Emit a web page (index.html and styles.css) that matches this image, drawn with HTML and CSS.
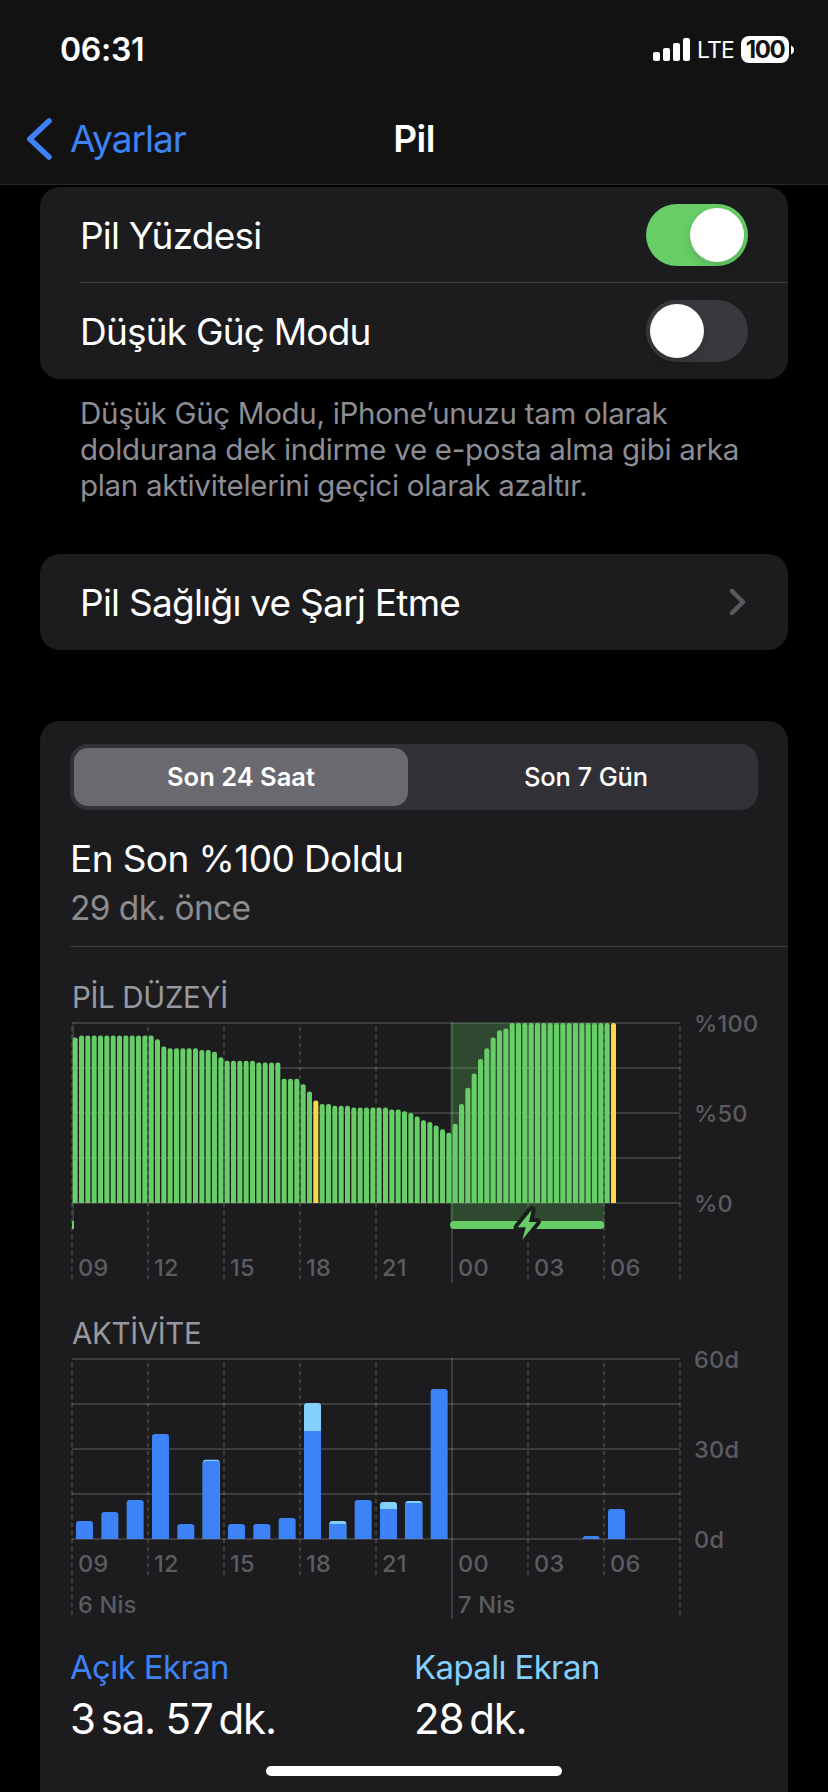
FILE: index.html
```
<!DOCTYPE html>
<html lang="tr">
<head>
    <meta charset="UTF-8">
    <meta name="viewport" content="width=device-width, initial-scale=1.0">
    <title>Pil</title>
    <link rel="stylesheet" href="styles.css">
</head>
<body>

    <div class="phone">
        <header class="header">
            <div class="status-bar">
                <span class="time">06:31</span>
                <div class="status-icons">
                    <svg class="signal" width="37" height="23" viewBox="0 0 37 23">
                        <rect x="0" y="14" width="7" height="9" rx="2"/>
                        <rect x="10" y="10" width="7" height="13" rx="2"/>
                        <rect x="20" y="5" width="7" height="18" rx="2"/>
                        <rect x="30" y="0" width="7" height="23" rx="2"/>
                    </svg>
                    <span class="network">LTE</span>
                    <span class="battery">100</span>
                    <svg class="battery-tip" width="3" height="10" viewBox="0 0 3 10">
                        <path d="M0 0.5C2 1 3 3 3 5S2 9 0 9.5Z"/>
                    </svg>
                </div>
            </div>
            <nav class="nav-bar">
                <a class="back">
                    <svg width="26" height="42" viewBox="0 0 26 42">
                        <path d="M22 3L2.800 21L22 39"/>
                    </svg>
                    <span>Ayarlar</span>
                </a>
                <h1 class="nav-title">Pil</h1>
            </nav>
        </header>

        <main class="content">
            <section class="group">
                <div class="row">
                    <span class="row-label">Pil Yüzdesi</span>
                    <div class="toggle on"><div class="knob"></div></div>
                </div>
                <div class="row">
                    <span class="row-label">Düşük Güç Modu</span>
                    <div class="toggle"><div class="knob"></div></div>
                </div>
            </section>
            <p class="footnote">Düşük Güç Modu, iPhone’unuzu tam olarak<br>doldurana dek indirme ve e-posta alma gibi arka<br>plan aktivitelerini geçici olarak azaltır.</p>

            <section class="group health">
                <div class="row">
                    <span class="row-label">Pil Sağlığı ve Şarj Etme</span>
                    <svg class="chevron" width="18" height="30" viewBox="0 0 18 30">
                        <path d="M3 4L14 15L3 26"/>
                    </svg>
                </div>
            </section>

            <section class="group usage">
                <div class="segmented">
                    <button class="segment selected">Son 24 Saat</button>
                    <button class="segment">Son 7 Gün</button>
                </div>
                <div class="last-charge">
                    <h2>En Son %100 Doldu</h2>
                    <p>29 dk. önce</p>
                </div>

                <h3 class="chart-title">PİL DÜZEYİ</h3>
                <svg class="chart" id="level-chart" width="718" height="270"></svg>

                <h3 class="chart-title activity-title">AKTİVİTE</h3>
                <svg class="chart" id="activity-chart" width="718" height="274"></svg>

                <div class="totals">
                    <div class="total screen-on">
                        <span class="total-label">Açık Ekran</span>
                        <span class="total-value">3<i></i>sa. 57<i></i>dk.</span>
                    </div>
                    <div class="total screen-off">
                        <span class="total-label">Kapalı Ekran</span>
                        <span class="total-value">28<i></i>dk.</span>
                    </div>
                </div>
            </section>
        </main>
        <div class="home-indicator"></div>
    </div>

    <script>
        const hours = ['09', '12', '15', '18', '21', '00', '03', '06'];

        // one value per 15 minutes
        const levels = [
            92, 93, 93, 93, 93, 93, 93, 93, 93, 93, 93, 93,
            93, 91, 87, 86, 86, 86, 86, 86, 85, 85, 84, 81,
            79, 79, 79, 79, 79, 78, 78, 78, 78, 69, 69, 69,
            66, 62, 57, 55, 55, 54, 54, 54, 53, 53, 53, 53,
            53, 53, 52, 52, 51, 50, 48, 46, 45, 43, 41, 39,
            44, 55, 64, 72, 80, 86, 92, 96, 97, 100, 100, 100,
            100, 100, 100, 100, 100, 100, 100, 100, 100, 100, 100, 100,
            100, 100
        ];
        const lowPower = [38, 85];

        // minutes per hour: [screen on, screen off]
        const activity = [
            [6, 0], [9, 0], [13, 0], [35, 0], [5, 0], [26, 0.4], [5, 0], [5, 0],
            [7, 0], [36, 9.3], [5, 1], [13, 0], [10, 2.3], [12, 0.7], [50, 0],
            [0, 0], [0, 0], [0, 0], [0, 0], [0, 0], [1, 0], [10, 0]
        ];

        function line(x1, y1, x2, y2, cls) {
            return `<line x1="${x1}" y1="${y1}" x2="${x2}" y2="${y2}" class="${cls}"/>`;
        }

        function text(x, y, value, cls) {
            return `<text x="${x}" y="${y}" class="${cls}">${value}</text>`;
        }

        // bar standing on the zero line with rounded top corners
        function bar(x, w, h, r, cls) {
            r = Math.min(r, h);
            return `<path class="${cls}" d="M${x} 180V${180 - h + r}q0 ${-r} ${r} ${-r}h${w - 2 * r}q${r} 0 ${r} ${r}V180Z"/>`;
        }

        function grid(tickEnd, edgeEnd, midnightEnd) {
            let out = '';
            for (let i = 0; i < 5; i++) {
                out += line(0, i * 45, 608, i * 45, 'grid-line');
            }
            for (let i = 0; i <= 8; i++) {
                const x = i * 76;
                if (i === 5) {
                    out += line(x, -1, x, midnightEnd, 'grid-line');
                } else {
                    out += line(x, 0, x, i % 8 === 0 ? edgeEnd : tickEnd, 'grid-line dashed');
                }
            }
            return out;
        }

        function hourLabels(y) {
            return hours.map((h, i) => text(i * 76 + 6, y, h, 'tick')).join('');
        }

        function drawLevels() {
            let out = grid(256, 256, 260);
            out += '<rect x="378.500" y="0" width="154" height="198" class="charging"/>';
            out += '<rect x="0.500" y="0" width="1.500" height="198" class="charging"/>';
            levels.forEach((v, i) => {
                out += bar(0.67 + i * 6.3333, 5, v * 1.8, 2.2, lowPower.includes(i) ? 'bar-low' : 'bar-level');
            });
            out += '<rect x="0" y="198" width="2" height="8" class="bar-level"/>';
            out += '<rect x="378" y="198" width="154.500" height="8" rx="4" class="bar-level"/>';
            const bolt = 'M459.700 187L445.700 204.300H453.800L450.300 216.700L464.700 199H457Z';
            out += `<path d="${bolt}" class="bolt-outline"/><path d="${bolt}" class="bolt"/>`;
            out += hourLabels(253);
            out += text(622, 9, '%100', 'scale') + text(622, 99, '%50', 'scale') + text(622, 189, '%0', 'scale');
            document.getElementById('level-chart').innerHTML = `<g transform="translate(2 8)">${out}</g>`;
        }

        function drawActivity() {
            let out = grid(216, 256, 260);
            activity.forEach(([on, off], i) => {
                const x = 4 + i * 25.3333;
                if (off > 0) {
                    out += bar(x, 17, (on + off) * 3, 3, 'bar-off');
                }
                if (on > 0) {
                    out += bar(x, 17, on * 3, off > 0.5 ? 0 : 3, 'bar-on');
                }
            });
            out += hourLabels(213);
            out += text(6, 254, '6 Nis', 'tick') + text(386, 254, '7 Nis', 'tick');
            out += text(622, 9, '60d', 'scale') + text(622, 99, '30d', 'scale') + text(622, 189, '0d', 'scale');
            document.getElementById('activity-chart').innerHTML = `<g transform="translate(2 8)">${out}</g>`;
        }

        drawLevels();
        drawActivity();
    </script>

</body>
</html>
```
FILE: styles.css
```
* {
    box-sizing: border-box;
}
body {
    margin: 0;
    background-color: #000;
    color: #fff;
    font-family: Inter, "Liberation Sans", sans-serif;
}
h1, h2, h3, p {
    margin: 0;
    font-weight: 400;
}
.phone {
    position: relative;
    width: 828px;
    height: 1792px;
    overflow: hidden;
}

/* header */
.header {
    height: 185px;
    background-color: #121212;
    border-bottom: 1px solid #2a2a2b;
}
.status-bar {
    display: flex;
    justify-content: space-between;
    align-items: center;
    height: 99px;
    padding: 0 34px 0 60px;
}
.time {
    font-size: 32px;
    font-weight: 600;
    letter-spacing: -0.3px;
}
.status-icons {
    display: flex;
    align-items: center;
}
.signal, .battery-tip {
    fill: #fff;
}
.network {
    margin-left: 7px;
    width: 44px;
    font-size: 23px;
    letter-spacing: -0.8px;
}
.battery {
    width: 48px;
    height: 27px;
    border-radius: 8px;
    background-color: #fff;
    color: #121212;
    font-size: 24px;
    font-weight: 700;
    line-height: 27px;
    letter-spacing: -1.4px;
    text-align: center;
}
.battery-tip {
    margin-left: 2px;
}
.nav-bar {
    display: grid;
    grid-template-columns: 1fr auto 1fr;
    align-items: center;
    height: 79px;
    padding: 0 27px;
}
.back {
    display: flex;
    align-items: center;
    gap: 17px;
    color: #3d82f7;
    font-size: 37px;
    letter-spacing: -1px;
}
.back svg {
    fill: none;
    stroke: #3d82f7;
    stroke-width: 5.5;
    stroke-linecap: round;
    stroke-linejoin: round;
}
.nav-title {
    font-size: 37px;
    font-weight: 600;
    letter-spacing: -0.6px;
}

/* setting groups */
.content {
    padding: 2px 40px 0;
}
.group {
    background-color: #1c1c1e;
    border-radius: 20px;
}
.row {
    position: relative;
    display: flex;
    justify-content: space-between;
    align-items: center;
    height: 96px;
    padding: 0 40px;
}
.row + .row::before {
    content: "";
    position: absolute;
    top: -1px;
    left: 40px;
    right: 0;
    height: 1px;
    background-color: #3d3d40;
}
.row-label {
    font-size: 37px;
    letter-spacing: -0.8px;
}
.toggle {
    width: 102px;
    height: 62px;
    padding: 4px;
    border-radius: 31px;
    background-color: #39393d;
}
.toggle.on {
    display: flex;
    justify-content: flex-end;
    background-color: #67ce67;
}
.knob {
    width: 54px;
    height: 54px;
    border-radius: 50%;
    background-color: #fff;
    box-shadow: 0 4px 10px rgba(0, 0, 0, 0.15);
}
.footnote {
    margin: 16px 0 0 40px;
    color: #8d8d93;
    font-size: 29.5px;
    line-height: 36px;
    letter-spacing: -0.3px;
    white-space: nowrap;
}
.health {
    margin-top: 51px;
}
.health .row-label {
    letter-spacing: -0.74px;
}
.chevron {
    margin-right: 1px;
    fill: none;
    stroke: #5a5a5e;
    stroke-width: 4.5;
    stroke-linecap: round;
    stroke-linejoin: round;
}

/* usage card */
.usage {
    height: 1100px;
    margin-top: 71px;
    padding: 23px 0 0 30px;
}
.segmented {
    display: grid;
    grid-template-columns: 334px 1fr;
    column-gap: 10px;
    width: 688px;
    height: 66px;
    padding: 4px;
    border-radius: 18px;
    background-color: #323137;
}
.segment {
    border: none;
    padding: 0 0 2px;
    border-radius: 14px;
    background: none;
    color: #fff;
    font-family: inherit;
    font-size: 25.5px;
    font-weight: 500;
    letter-spacing: -0.1px;
}
.segment.selected {
    background-color: #6a696f;
    font-weight: 600;
    letter-spacing: 0;
}
.last-charge {
    margin-top: 27px;
    padding-bottom: 17px;
    border-bottom: 1px solid #3d3d40;
}
.last-charge h2 {
    font-size: 37px;
    line-height: 44px;
    letter-spacing: -0.6px;
}
.last-charge p {
    margin-top: 6px;
    color: #8b8b8e;
    font-size: 33.5px;
    line-height: 42px;
    letter-spacing: -0.6px;
}
.chart-title {
    margin: 32px 0 0 2px;
    color: #98989f;
    font-size: 29.5px;
    line-height: 36px;
    letter-spacing: -0.35px;
}
.activity-title {
    margin-top: 30px;
}
.chart {
    display: block;
    overflow: visible;
}
.grid-line {
    stroke: #fff;
    stroke-opacity: 0.15;
    stroke-width: 2;
}
.dashed {
    stroke-dasharray: 4 4;
    stroke-dashoffset: 4;
}
.tick, .scale {
    fill: #5b5b60;
    font-size: 23.5px;
    font-weight: 500;
    letter-spacing: 0.25px;
}
.charging {
    fill: rgba(103, 206, 103, 0.25);
}
.bar-level, .bolt {
    fill: #67ce67;
}
.bar-low {
    fill: #fcd748;
}
.bar-on {
    fill: #3d82f7;
}
.bar-off {
    fill: #84d0fc;
}
.bolt-outline {
    fill: #1c1c1e;
    stroke: #1c1c1e;
    stroke-width: 8;
    stroke-linejoin: round;
}
.totals {
    display: grid;
    grid-template-columns: 344px 344px;
    margin-top: 21px;
}
.total {
    display: flex;
    flex-direction: column;
    gap: 6px;
}
.total-label {
    font-size: 33px;
    line-height: 42px;
    letter-spacing: -0.65px;
}
.screen-on .total-label {
    color: #3d82f7;
}
.screen-off .total-label {
    color: #84d0fc;
}
.total-value {
    font-size: 42px;
    line-height: 50px;
    letter-spacing: -1.2px;
}
.total-value i {
    display: inline-block;
    width: 6px;
}
.home-indicator {
    position: absolute;
    left: 266px;
    bottom: 16px;
    width: 296px;
    height: 10px;
    border-radius: 5px;
    background-color: #fff;
}
```
